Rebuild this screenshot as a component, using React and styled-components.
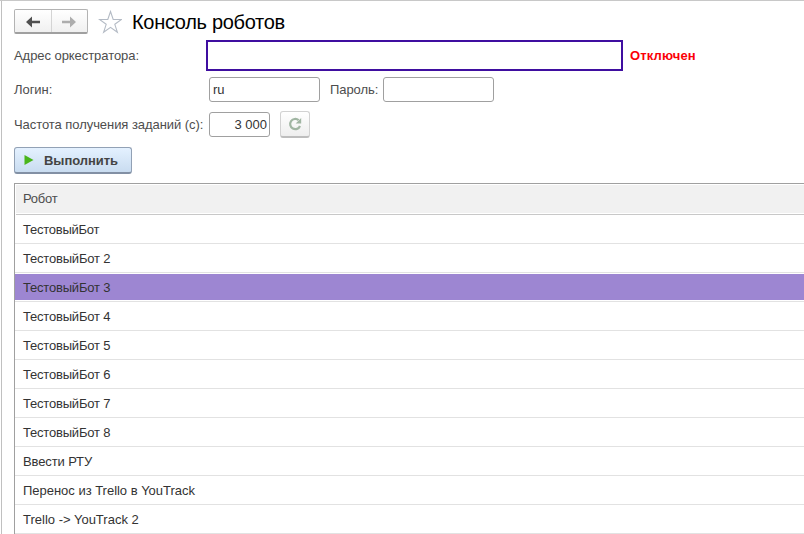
import React from 'react';
import styled, { createGlobalStyle } from 'styled-components';

const GlobalStyle = createGlobalStyle`
  * { box-sizing: border-box; }
  body { margin: 0; background: #fff; overflow: hidden; }
  button, input { font: inherit; letter-spacing: inherit; }
`;

const Window = styled.main`
  width: 100%;
  height: 534px;
  overflow: hidden;
  display: flex;
  border-top: 1px solid #c8c8c8;
  font: 13px/15px "Liberation Sans", Arial, sans-serif;
  color: #4d4d4d;
  background: #fff;
`;

const Edge = styled.div`
  flex: none;
  width: 2px;
  border-right: 1px solid #c0c0c0;
`;

const Content = styled.div`
  flex: 1;
  min-width: 0;
  padding: 8px 0 0 12px;
`;

const TitleBar = styled.header`
  display: flex;
  align-items: center;
  height: 25px;
`;

const NavGroup = styled.div`
  display: flex;
  width: 74px;
  height: 25px;
  border: 1px solid #b3b3b3;
  border-bottom: 2px solid #a0a0a0;
  border-radius: 2px;
  background: linear-gradient(#fff, #f0f0f0);
`;

const NavButton = styled.button`
  display: flex;
  align-items: center;
  justify-content: center;
  flex: 1;
  padding: 1px 0 0;
  border: 0;
  background: none;
  & + & { border-left: 1px solid #d4d4d4; }
`;

const StarIcon = styled.svg`
  margin: 0 10px;
`;

const Title = styled.h1`
  margin: 0;
  font-size: 20px;
  line-height: 24px;
  font-weight: 400;
  letter-spacing: -0.31px;
  color: #000;
`;

const FormRow = styled.div`
  display: flex;
  align-items: center;
  height: ${(p) => p.$height}px;
  margin-top: ${(p) => p.$gap}px;
`;

const Label = styled.label`
  flex: none;
  width: ${(p) => p.$width}px;
  padding-left: ${(p) => p.$indent || 0}px;
  letter-spacing: -0.06px;
  white-space: nowrap;
`;

const Field = styled.input`
  width: ${(p) => p.$width}px;
  height: 25px;
  padding: 0 ${(p) => (p.$align ? 2 : 3)}px 0 3px;
  border: 1px solid #a0a0a0;
  border-radius: 3px;
  outline: 0;
  color: #333;
  background: #fff;
  text-align: ${(p) => p.$align || 'left'};
`;

const ActiveField = styled(Field)`
  height: 31px;
  border: 2px solid #3f0ea0;
  border-radius: 0;
`;

const Status = styled.span`
  margin-left: 7px;
  font-weight: 700;
  color: #fb0007;
  letter-spacing: 0.15px;
`;

const RefreshButton = styled.button`
  display: flex;
  align-items: center;
  justify-content: center;
  width: 30px;
  height: 27px;
  margin-left: 10px;
  padding: 0;
  border: 1px solid #d2d2d2;
  border-bottom: 2px solid #bdbdbd;
  border-radius: 3px;
  background: linear-gradient(#fff, #eee);
`;

const RunButton = styled.button`
  display: flex;
  align-items: center;
  width: 118px;
  height: 27px;
  margin-top: 9px;
  padding: 0 0 0 9px;
  gap: 10px;
  border: 1px solid #92a1b5;
  border-bottom: 2px solid #8290a4;
  border-radius: 3px;
  background: linear-gradient(#e4f1ff, #c9dcf0);
  font-weight: 700;
  color: #444;
  letter-spacing: -0.05px;
`;

const Table = styled.section`
  margin-top: 9px;
  height: 360px;
  border-top: 1px solid #a0a0a0;
  border-left: 1px solid #a0a0a0;
`;

const Cell = styled.div`
  display: flex;
  align-items: center;
  padding-left: 8px;
`;

const HeaderCell = styled(Cell)`
  height: 31px;
  padding: 0 0 3px 7px;
  border: 1px solid #fff;
  border-right: 0;
  border-bottom: 0;
  background: #f1f1f1;
  box-shadow: inset 0 -1px #c8c8c8, inset 0 -2px #fff;
  letter-spacing: -0.25px;
`;

const RobotRow = styled(Cell)`
  height: 29px;
  color: #333;
  letter-spacing: ${(p) => p.$spacing}px;
  background: ${(p) => (p.$selected ? '#9d86d2' : '#fff')};
  box-shadow: inset 0 -1px #e2e2e2, inset 0 -2px #fff, inset 0 1px #fff;
`;

const robots = [
  { name: 'ТестовыйБот', spacing: -0.24 },
  ...[2, 3, 4, 5, 6, 7, 8].map((n) => ({ name: `ТестовыйБот ${n}`, spacing: -0.2 })),
  { name: 'Ввести РТУ', spacing: -0.12 },
  { name: 'Перенос из Trello в YouTrack', spacing: -0.02 },
  { name: 'Trello -> YouTrack 2', spacing: 0 },
];

export default function App() {
  return (
    <>
      <GlobalStyle />
      <Window>
        <Edge />
        <Content>
          <TitleBar>
            <NavGroup>
              <NavButton aria-label="Назад">
                <svg width="14" height="12" viewBox="0 0 14 12">
                  <path d="M0 6 6 .5V4.8H14v2.4H6v4.3Z" fill="#505050" />
                </svg>
              </NavButton>
              <NavButton aria-label="Вперёд">
                <svg width="14" height="12" viewBox="0 0 14 12">
                  <path d="M14 6 8 .5V4.8H0v2.4h8v4.3Z" fill="#adadad" />
                </svg>
              </NavButton>
            </NavGroup>
            <StarIcon width="24" height="24" viewBox="0 0 24 24">
              <path d="M12.5 1.5 15.2 9.5H23.5L16.8 14.3 19.4 22.3 12.5 17.4 5.6 22.3 8.2 14.3 1.5 9.5H9.8Z" fill="#fff" stroke="#b4bbc5" strokeWidth="1.1" />
            </StarIcon>
            <Title>Консоль роботов</Title>
          </TitleBar>
          <FormRow $height={31} $gap={6}>
            <Label $width={192} htmlFor="address">Адрес оркестратора:</Label>
            <ActiveField $width={417} id="address" />
            <Status>Отключен</Status>
          </FormRow>
          <FormRow $height={25} $gap={6}>
            <Label $width={195} htmlFor="login">Логин:</Label>
            <Field $width={111} id="login" defaultValue="ru" />
            <Label $width={63} $indent={10} htmlFor="password">Пароль:</Label>
            <Field $width={111} id="password" type="password" />
          </FormRow>
          <FormRow $height={27} $gap={9}>
            <Label $width={195} htmlFor="interval">Частота получения заданий (с):</Label>
            <Field $width={61} $align="right" id="interval" defaultValue="3 000" />
            <RefreshButton aria-label="Обновить">
              <svg width="14" height="14" viewBox="0 0 14 14">
                <path d="M12 9A5.1 5.1 0 1 1 10.6 3.2" fill="none" stroke="#a0b5a2" strokeWidth="2.2" />
                <path d="M13.2 1v5.5H7.7Z" fill="#a0b5a2" />
              </svg>
            </RefreshButton>
          </FormRow>
          <RunButton>
            <svg width="10" height="10" viewBox="0 0 10 10">
              <path d="M.5 0 9.5 5 .5 10Z" fill="#49b51b" />
            </svg>
            Выполнить
          </RunButton>
          <Table>
            <HeaderCell>Робот</HeaderCell>
            {robots.map(({ name, spacing }, i) => (
              <RobotRow key={name} $spacing={spacing} $selected={i === 2}>{name}</RobotRow>
            ))}
          </Table>
        </Content>
      </Window>
    </>
  );
}
